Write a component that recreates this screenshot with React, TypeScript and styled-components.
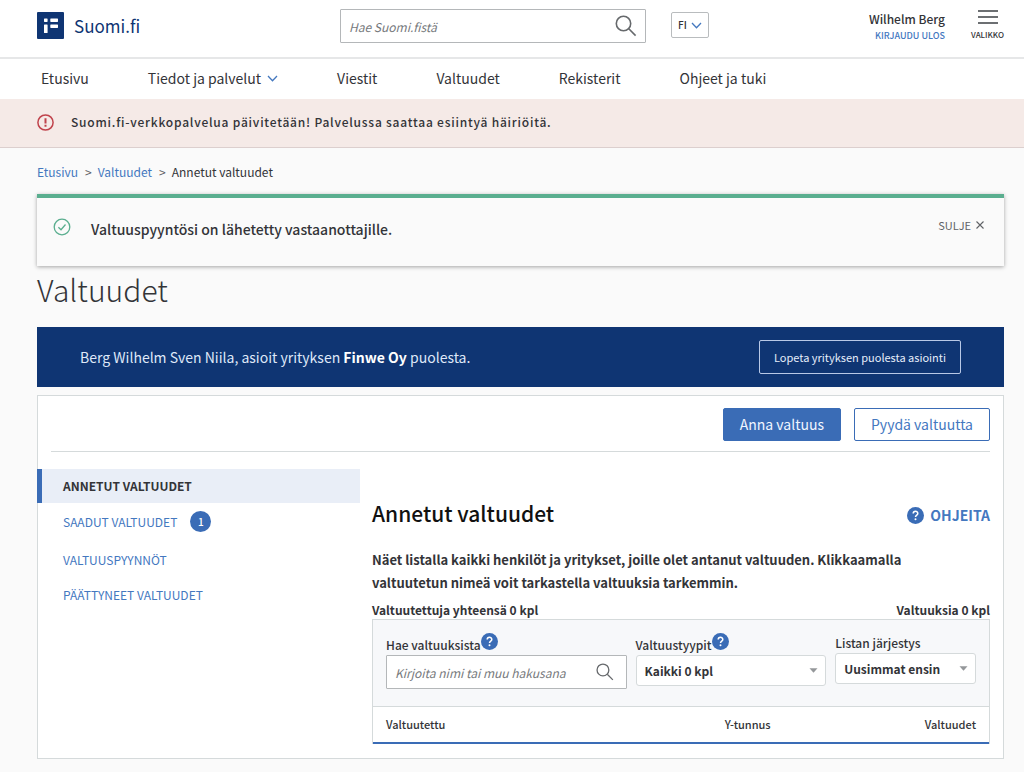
import React from "react";
import styled, { createGlobalStyle } from "styled-components";

const color = {
  navy: "#0f3573",
  blue: "#3a6cb6",
  link: "#4478bf",
  text: "#333438",
  grey: "#5f6266",
  line: "#d5dadb",
  green: "#5aae8f",
  red: "#c0434c",
};

const GlobalStyle = createGlobalStyle`
  *, *::before, *::after { box-sizing: border-box; }
  body {
    margin: 0;
    background: #fafafa;
    color: ${color.text};
    font: 400 14px/20px "Noto Sans CJK JP", "Noto Sans", sans-serif;
  }
  button, input, select { font: inherit; color: inherit; margin: 0; }
  button { cursor: pointer; }
  a { color: ${color.link}; text-decoration: none; }
  h1, h2, p, ul, ol { margin: 0; padding: 0; }
  ul, ol { list-style: none; }
  svg { display: block; flex: none; }
`;

const Header = styled.header`
  display: flex;
  align-items: flex-start;
  height: 59px;
  padding: 0 20px 0 37px;
  background: #fff;
  border-bottom: 2px solid #e6e7e8;
`;

const Logo = styled.a`
  flex: 0 1 303px;
  display: flex;
  align-items: center;
  gap: 10px;
  margin-top: 12px;
  color: ${color.navy};
  font-size: 17px;
  line-height: 27px;
`;

const SearchBox = styled.div`
  display: flex;
  align-items: center;
  height: 34px;
  padding-right: 12px;
  background: #fff;
  border: 1px solid #b4b7b9;
  border-radius: 1px;
  color: #66696c;
`;

const HeaderSearch = styled(SearchBox)`
  flex: 0 1 306px;
  margin-top: 9px;
  padding-right: 8px;
`;

const SearchInput = styled.input`
  flex: 1;
  min-width: 0;
  height: 100%;
  padding: 0 8px;
  border: 0;
  outline: 0;
  background: none;
  font-size: 12px;
  font-style: italic;
  &::placeholder { color: #76797c; opacity: 1; }
`;

const IconButton = styled.button`
  display: flex;
  padding: 0;
  border: 0;
  background: none;
  color: inherit;
`;

const SelectWrap = styled.span`
  position: relative;
  display: block;
  svg {
    position: absolute;
    right: 8px;
    top: 50%;
    margin-top: -3px;
    pointer-events: none;
  }
`;

const Language = styled(SelectWrap)`
  flex: none;
  margin: 12px 0 0 25px;
  svg { right: 7px; }
`;

const LanguageSelect = styled.select`
  display: block;
  width: 38px;
  height: 26px;
  padding: 0 0 0 6px;
  appearance: none;
  background: #fff;
  border: 1px solid #b9bcbe;
  border-radius: 2px;
  font-size: 10px;
  font-weight: 500;
`;

const User = styled.div`
  margin: 9px 0 0 auto;
  text-align: right;
  font-size: 12px;
  font-weight: 500;
`;

const Logout = styled.a`
  display: block;
  font-size: 9px;
  line-height: 14px;
`;

const MenuButton = styled(IconButton)`
  flex-direction: column;
  align-items: center;
  gap: 5px;
  margin: 10px 0 0 26px;
  font-size: 8px;
  font-weight: 500;
  line-height: 12px;
`;

const Nav = styled.nav`
  background: #fff;
  ul {
    display: flex;
    gap: 59px;
    height: 40px;
    padding: 0 20px 2px 41px;
    align-items: center;
  }
  a {
    display: flex;
    align-items: center;
    gap: 6px;
    color: ${color.text};
    font-size: 14px;
  }
`;

const Alert = styled.div`
  display: flex;
  align-items: center;
  gap: 17px;
  height: 49px;
  padding: 0 20px 2px 37px;
  background: #f5eae7;
  border-bottom: 1px solid #dccfce;
  font-size: 12px;
  font-weight: 500;
  letter-spacing: 0.065em;
`;

const Page = styled.main`
  padding: 14px 20px 14px 37px;
`;

const Breadcrumb = styled.ol`
  display: flex;
  gap: 7px;
  font-size: 12px;
  line-height: 20px;
  li { display: flex; gap: 6px; }
  li + li::before { content: ">"; color: ${color.grey}; }
`;

const Notice = styled.section`
  display: flex;
  align-items: flex-start;
  gap: 20px;
  height: 72px;
  margin-top: 12px;
  padding: 17px 20px 0 16px;
  border-top: 4px solid ${color.green};
  box-shadow: 0 1px 4px rgba(0, 0, 0, 0.35);
  p {
    flex: 1;
    padding-top: 4px;
    font-size: 14px;
    font-weight: 500;
  }
  > svg { margin-top: 3px; }
`;

const Close = styled(IconButton)`
  align-items: center;
  gap: 5px;
  color: ${color.grey};
  font-size: 11px;
`;

const Title = styled.h1`
  margin: 2px 0 17px;
  font-size: 30px;
  font-weight: 300;
  line-height: 42px;
`;

const Banner = styled.section`
  display: flex;
  align-items: center;
  justify-content: space-between;
  height: 60px;
  padding: 0 43px;
  background: ${color.navy};
  color: #dfe8f8;
  font-size: 14px;
  strong { color: #fff; font-weight: 700; }
`;

const Button = styled.button<{ $kind: "primary" | "secondary" | "inverse" }>`
  height: ${(p) => (p.$kind === "inverse" ? 34 : 33)}px;
  padding: 0 ${(p) => (p.$kind === "inverse" ? 14 : 16)}px 1px;
  border: 1px solid ${(p) => (p.$kind === "inverse" ? "#b8c8e6" : color.blue)};
  border-radius: 2px;
  background: ${(p) => ({ primary: color.blue, secondary: "#fff", inverse: "transparent" })[p.$kind]};
  color: ${(p) => ({ primary: "#f0f5ff", secondary: color.link, inverse: "#e6eefb" })[p.$kind]};
  font-size: ${(p) => (p.$kind === "inverse" ? 11 : 14)}px;
  white-space: nowrap;
`;

const Card = styled.section`
  margin-top: 8px;
  padding: 0 13px 14px 0;
  background: #fff;
  border: 1px solid ${color.line};
`;

const Actions = styled.div`
  display: flex;
  justify-content: flex-end;
  gap: 13px;
  height: 56px;
  margin-left: 13px;
  padding-top: 12px;
  border-bottom: 1px solid ${color.line};
`;

const Columns = styled.div`
  display: grid;
  grid-template-columns: 322px minmax(0, 1fr);
  column-gap: 12px;
  padding-top: 17px;
`;

const SideNav = styled.nav`
  margin-left: -1px;
`;

const SideList = styled.ul`
  li:nth-child(2) { padding: 1px 0 3px; }
`;

const SideLink = styled.a<{ $active?: boolean }>`
  display: flex;
  align-items: center;
  gap: 13px;
  height: ${(p) => (p.$active ? 34 : 35)}px;
  padding-left: 21px;
  border-left: 5px solid ${(p) => (p.$active ? color.blue : "transparent")};
  background: ${(p) => (p.$active ? "#e9eef7" : "none")};
  color: ${(p) => (p.$active ? color.text : color.link)};
  font-size: 12px;
  font-weight: ${(p) => (p.$active ? 700 : 400)};
`;

const Count = styled.span`
  width: 21px;
  height: 21px;
  border-radius: 50%;
  background: ${color.blue};
  color: #fff;
  font-size: 10px;
  font-weight: 500;
  line-height: 21px;
  text-align: center;
`;

const SectionHead = styled.div`
  display: flex;
  align-items: center;
  justify-content: space-between;
  margin-top: 29px;
  h2 {
    color: #111;
    font-size: 21px;
    font-weight: 500;
    line-height: 30px;
  }
`;

const HelpLink = styled.a`
  display: flex;
  align-items: center;
  gap: 6px;
  padding-top: 4px;
  font-size: 14px;
  font-weight: 700;
`;

const Intro = styled.p`
  margin-top: 20px;
  padding-right: 24px;
  font-size: 13px;
  font-weight: 700;
  line-height: 23px;
`;

const Totals = styled.div`
  display: flex;
  justify-content: space-between;
  margin-top: 7px;
  font-size: 12px;
  font-weight: 700;
  line-height: 18px;
`;

const Listing = styled.div`
  border: solid ${color.line};
  border-width: 1px 1px 0;
`;

const Filters = styled.div`
  display: grid;
  grid-template-columns: 241fr 191fr 141fr;
  gap: 9px;
  padding: 13px 13px 17px;
  background: #f7f8fa;
  border-bottom: 1px solid ${color.line};
`;

const LabelRow = styled.div<{ $help?: boolean }>`
  display: flex;
  height: ${(p) => (p.$help ? 22 : 20)}px;
  font-size: 12px;
  font-weight: 500;
  line-height: 20px;
  label { padding-top: ${(p) => (p.$help ? 2 : 0)}px; }
  button { align-self: flex-start; }
`;

const Select = styled.select`
  display: block;
  width: 100%;
  height: 31px;
  padding: 0 8px;
  appearance: none;
  background: #fff;
  border: 1px solid ${color.line};
  border-radius: 3px;
  font-size: 12px;
  font-weight: 700;
`;

const Table = styled.table`
  width: 100%;
  border-collapse: collapse;
  th {
    height: 36px;
    padding: 0 13px 2px;
    border-bottom: 2px solid ${color.blue};
    font-size: 11px;
    font-weight: 500;
    text-align: left;
  }
  th:first-child { width: 55%; }
  th:last-child { text-align: right; }
`;

const SearchIcon = ({ size }: { size: number }) => (
  <svg width={size} height={size} viewBox="0 0 22 22" fill="none" stroke="currentColor" strokeWidth="1.6">
    <circle cx="8.5" cy="8.5" r="7.2" />
    <path d="M13.8 13.8 20.6 20.6" />
  </svg>
);

const Chevron = () => (
  <svg width="11" height="7" viewBox="0 0 11 7" fill="none" stroke={color.link} strokeWidth="1.3">
    <path d="M1 1 5.5 5.7 10 1" />
  </svg>
);

const Caret = () => (
  <svg width="9" height="5" viewBox="0 0 9 5">
    <path d="M0.5 0.3h8L4.5 4.7z" fill="#94979a" />
  </svg>
);

const HelpIcon = () => (
  <svg width="17" height="17" viewBox="0 0 17 17" fill="none">
    <circle cx="8.5" cy="8.5" r="8.5" fill={color.blue} />
    <path d="M6.2 6.6C6.2 3.6 10.8 3.7 10.8 6.4 10.8 8.2 8.5 8 8.5 10.1" stroke="#fff" strokeWidth="1.5" />
    <circle cx="8.5" cy="12.2" r="1" fill="#fff" />
  </svg>
);

const navItems = ["Etusivu", "Tiedot ja palvelut", "Viestit", "Valtuudet", "Rekisterit", "Ohjeet ja tuki"];

const sideItems = [
  { label: "ANNETUT VALTUUDET", active: true },
  { label: "SAADUT VALTUUDET", count: 1 },
  { label: "VALTUUSPYYNNÖT" },
  { label: "PÄÄTTYNEET VALTUUDET" },
];

export default function App() {
  return (
    <>
      <GlobalStyle />
      <Header>
        <Logo href="#">
          <svg width="27" height="27" viewBox="0 0 27 27">
            <rect width="27" height="27" rx="1" fill={color.navy} />
            <g fill="#fff">
              <rect x="7" y="6.5" width="3.6" height="3.4" rx=".6" />
              <rect x="7" y="12.5" width="3.6" height="8.5" rx=".6" />
              <rect x="13.3" y="6.5" width="7.7" height="3.4" rx=".6" />
              <rect x="13.3" y="12.5" width="7.7" height="3.4" rx=".6" />
            </g>
          </svg>
          Suomi.fi
        </Logo>
        <HeaderSearch>
          <SearchInput type="text" aria-label="Hae Suomi.fistä" placeholder="Hae Suomi.fistä" />
          <IconButton aria-label="Hae"><SearchIcon size={22} /></IconButton>
        </HeaderSearch>
        <Language>
          <LanguageSelect aria-label="Kieli"><option>FI</option></LanguageSelect>
          <Chevron />
        </Language>
        <User>
          Wilhelm Berg
          <Logout href="#">KIRJAUDU ULOS</Logout>
        </User>
        <MenuButton>
          <svg width="20" height="14" viewBox="0 0 20 14" stroke="#6c6f72" strokeWidth="1.8">
            <path d="M0 1h20M0 7h20M0 13h20" />
          </svg>
          VALIKKO
        </MenuButton>
      </Header>
      <Nav>
        <ul>
          {navItems.map((item, i) => (
            <li key={item}>
              <a href="#">{item}{i === 1 && <Chevron />}</a>
            </li>
          ))}
        </ul>
      </Nav>
      <Alert>
        <svg width="17" height="17" viewBox="0 0 17 17" fill="none" stroke={color.red}>
          <circle cx="8.5" cy="8.5" r="7.6" strokeWidth="1.5" />
          <path d="M8.5 4.2v5.2M8.5 10.8v2" strokeWidth="2" />
        </svg>
        Suomi.fi-verkkopalvelua päivitetään! Palvelussa saattaa esiintyä häiriöitä.
      </Alert>
      <Page>
        <Breadcrumb>
          <li><a href="#">Etusivu</a></li>
          <li><a href="#">Valtuudet</a></li>
          <li>Annetut valtuudet</li>
        </Breadcrumb>
        <Notice>
          <svg width="18" height="18" viewBox="0 0 18 18" fill="none" stroke={color.green} strokeWidth="1.3">
            <circle cx="9" cy="9" r="7.8" />
            <path d="M5.4 9.3 8 11.7 12.5 6.5" />
          </svg>
          <p>Valtuuspyyntösi on lähetetty vastaanottajille.</p>
          <Close>
            SULJE
            <svg width="8" height="8" viewBox="0 0 8 8" stroke="currentColor" strokeWidth="1.1">
              <path d="M.5.5l7 7M7.5.5l-7 7" />
            </svg>
          </Close>
        </Notice>
        <Title>Valtuudet</Title>
        <Banner>
          <p>Berg Wilhelm Sven Niila, asioit yrityksen <strong>Finwe Oy</strong> puolesta.</p>
          <Button $kind="inverse">Lopeta yrityksen puolesta asiointi</Button>
        </Banner>
        <Card>
          <Actions>
            <Button $kind="primary">Anna valtuus</Button>
            <Button $kind="secondary">Pyydä valtuutta</Button>
          </Actions>
          <Columns>
            <SideNav>
              <SideList>
                {sideItems.map((item) => (
                  <li key={item.label}>
                    <SideLink href="#" $active={item.active}>
                      {item.label}
                      {item.count && <Count>{item.count}</Count>}
                    </SideLink>
                  </li>
                ))}
              </SideList>
            </SideNav>
            <div>
              <SectionHead>
                <h2>Annetut valtuudet</h2>
                <HelpLink href="#"><HelpIcon />OHJEITA</HelpLink>
              </SectionHead>
              <Intro>
                Näet listalla kaikki henkilöt ja yritykset, joille olet antanut valtuuden. Klikkaamalla
                valtuutetun nimeä voit tarkastella valtuuksia tarkemmin.
              </Intro>
              <Totals>
                <span>Valtuutettuja yhteensä 0 kpl</span>
                <span>Valtuuksia 0 kpl</span>
              </Totals>
              <Listing>
                <Filters>
                  <div>
                    <LabelRow $help>
                      <label htmlFor="haku">Hae valtuuksista</label>
                      <IconButton aria-label="Ohje"><HelpIcon /></IconButton>
                    </LabelRow>
                    <SearchBox>
                      <SearchInput id="haku" type="text" placeholder="Kirjoita nimi tai muu hakusana" />
                      <IconButton aria-label="Hae"><SearchIcon size={18} /></IconButton>
                    </SearchBox>
                  </div>
                  <div>
                    <LabelRow $help>
                      <label htmlFor="tyypit">Valtuustyypit</label>
                      <IconButton aria-label="Ohje"><HelpIcon /></IconButton>
                    </LabelRow>
                    <SelectWrap>
                      <Select id="tyypit"><option>Kaikki 0 kpl</option></Select>
                      <Caret />
                    </SelectWrap>
                  </div>
                  <div>
                    <LabelRow>
                      <label htmlFor="jarjestys">Listan järjestys</label>
                    </LabelRow>
                    <SelectWrap>
                      <Select id="jarjestys"><option>Uusimmat ensin</option></Select>
                      <Caret />
                    </SelectWrap>
                  </div>
                </Filters>
                <Table>
                  <thead>
                    <tr><th>Valtuutettu</th><th>Y-tunnus</th><th>Valtuudet</th></tr>
                  </thead>
                </Table>
              </Listing>
            </div>
          </Columns>
        </Card>
      </Page>
    </>
  );
}
